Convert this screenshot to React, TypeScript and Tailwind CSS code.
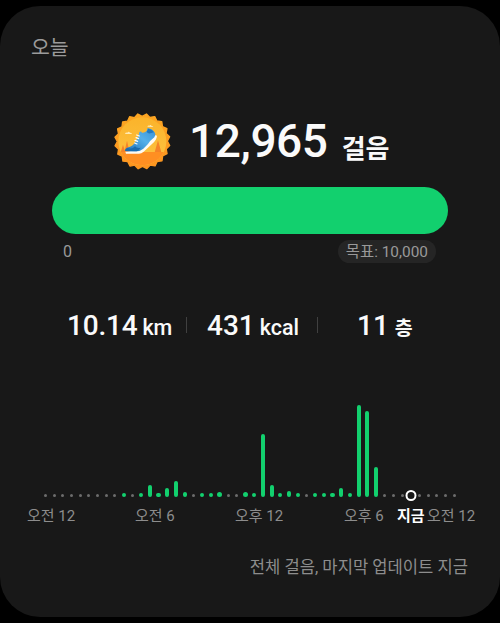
const font = "font-['Roboto','Noto_Sans_CJK_KR',sans-serif]"

// one value per half hour, 0 means no steps
const steps = [
  0, 0, 0, 0, 0, 0, 0, 0, 0, 4, 0, 4, 12, 4, 9, 16, 5, 0, 4, 4, 5, 0, 0, 5,
  4, 63, 12, 4, 6, 4, 0, 4, 4, 4, 9, 4, 92, 86, 30, 0, 0, 0, 0, 0, 0, 0, 0, 0,
]
const now = 42

const rim = Array.from({ length: 40 }, (_, i) => {
  const a = (i * Math.PI) / 20 + 0.15
  const r = i % 2 ? 75 : 83
  return `${(115 + Math.cos(a) * r).toFixed(1)},${(109 + Math.sin(a) * r).toFixed(1)}`
}).join(' ')

function StepsBadge() {
  return (
    <svg className="h-[58px] w-[58px]" viewBox="27 24 174 174" aria-hidden="true">
      <defs>
        <linearGradient id="sky" x1="0" y1="0" x2="0" y2="1">
          <stop offset="0" stopColor="#fbb32a" />
          <stop offset="1" stopColor="#fcc444" />
        </linearGradient>
        <linearGradient id="rim" x1="0" y1="0" x2="0" y2="1">
          <stop offset="0" stopColor="#fba522" />
          <stop offset="1" stopColor="#fd9520" />
        </linearGradient>
        <linearGradient id="shoe" x1="1" y1="0" x2="0" y2="1">
          <stop offset="0" stopColor="#3790d6" />
          <stop offset="0.45" stopColor="#55b0ea" />
          <stop offset="1" stopColor="#1c70b6" />
        </linearGradient>
        <clipPath id="disc">
          <circle cx="115" cy="109" r="72" />
        </clipPath>
      </defs>
      <polygon points={rim} fill="url(#rim)" stroke="url(#rim)" strokeWidth="4" strokeLinejoin="round" />
      <g clipPath="url(#disc)">
        <rect x="40" y="35" width="150" height="150" fill="url(#sky)" />
        <path d="M57 119l7 23H50zM69 107l8 35H61zM162 106l10 36h-20z" fill="#f58328" />
        <rect x="40" y="141" width="150" height="50" fill="#ff8f22" />
      </g>
      <path d="M63 87q1-5 7-4 4-5 8 0 5 0 6 4zM130 65q2-4 6-3 4-4 7 1 4 0 5 3z" fill="#ffe9b0" />
      <path d="M64 140l2 6h39q7 0 14-6l25-23q14-12 15-25l-7-2-50 45z" fill="#fffaf0" />
      <path
        d="M64 138q-2-8 10-11 12-3 20-16l9-15 3-15q5-4 8 2 8 1 14-5l3-9q16 3 22 15 3 7-2 13-13 10-19 20l-14 14q-9 8-22 8h-26z"
        fill="url(#shoe)"
      />
      <path d="M64 138q-1-7 8-9 12 5 21-5 6 7 17 4l-7 9q-5 2-10 2z" fill="#1a6cae" />
      <path d="M128 80q4 8 14 4l8-2q-5-9-17-11z" fill="#2279be" />
      <path
        d="M98 90l8 3M96 98l8 3M93 106l8 3M92 114l7 3"
        stroke="#f7fbff"
        strokeWidth="3.5"
        strokeLinecap="round"
      />
    </svg>
  )
}

function StepsChart() {
  return (
    <div className="ml-[41px] flex h-[96px] w-[418px] items-end">
      {steps.map((value, i) => (
        <div key={i} className="relative flex flex-1 justify-center">
          {value > 0 ? (
            <div className="w-[4.2px] rounded-full bg-[#12d06e]" style={{ height: value }} />
          ) : (
            i !== now && <div className="h-[3px] w-[3px] rounded-full bg-[#6c6c6c]" />
          )}
          {i === now && (
            <div className="absolute bottom-[-4px] left-1/2 h-[11px] w-[11px] -translate-x-1/2 rounded-full border-[2.5px] border-white bg-[#181818]" />
          )}
        </div>
      ))}
    </div>
  )
}

export default function App() {
  return (
    <div className={`h-[623px] w-[500px] overflow-hidden bg-black pt-[6px] whitespace-nowrap ${font}`}>
      <div className="h-[611px] rounded-[40px] bg-[#181818]">
        {/* title */}
        <div className="h-[107px] pt-[32px] pl-[31px] text-[20.5px] leading-[20px] text-[#9b9b9b]">오늘</div>

        {/* step count */}
        <div className="flex h-[74px] pl-[113px]">
          <StepsBadge />
          <div className="ml-[18px] flex items-baseline font-medium text-[#fafafa]">
            <span className="text-[46px] leading-[56px] tracking-[-0.4px]">12,965</span>
            <span className="relative top-px ml-[14px] text-[26px] leading-none font-bold">걸음</span>
          </div>
        </div>

        {/* goal */}
        <div className="mx-[52px] h-[47px] rounded-full bg-[#12d06e]" />
        <div className="mt-[6px] flex h-[23px] items-center justify-between pr-[64px] pl-[63px] text-[16px] leading-[23px] text-[#999]">
          <span>0</span>
          <span className="h-[23px] rounded-full bg-[#252525] px-[8px] text-[15.4px] leading-[24px]">목표: 10,000</span>
        </div>

        {/* distance, calories, floors */}
        <div className="mt-[43px] flex h-[38px] items-center text-[28px] leading-[38px] font-medium text-[#fafafa]">
          <div className="w-[186px] pt-[3px] pl-[67px]">
            <span className="tracking-[-0.2px]">10.14</span> <span className="-ml-[2px] text-[21.5px]">km</span>
          </div>
          <div className="h-4 w-px bg-[#404040]" />
          <div className="w-[130px] pt-[3px] pl-[20px]">
            431 <span className="-ml-[2px] text-[21.5px]">kcal</span>
          </div>
          <div className="h-4 w-px bg-[#404040]" />
          <div className="pt-[2px] pl-[39px]">
            11 <span className="-ml-[1px] text-[19.5px] leading-none font-bold">층</span>
          </div>
        </div>

        {/* steps by time of day */}
        <div className="mt-[57px]">
          <StepsChart />
          <div className="mt-[9px] flex h-[20px] pl-[27px] text-[15px] leading-[20px] text-[#8d8d8d]">
            <span className="w-[108px]">오전 12</span>
            <span className="w-[100px]">오전 6</span>
            <span className="w-[109px]">오후 12</span>
            <span className="w-[53px]">오후 6</span>
            <span className="w-[30px] font-bold text-white">지금</span>
            <span>오전 12</span>
          </div>
        </div>

        <p className="mt-[32px] pr-[32px] text-right text-[16.6px] leading-[20px] text-[#8d8d8d]">
          전체 걸음, 마지막 업데이트 지금
        </p>
      </div>
    </div>
  )
}
